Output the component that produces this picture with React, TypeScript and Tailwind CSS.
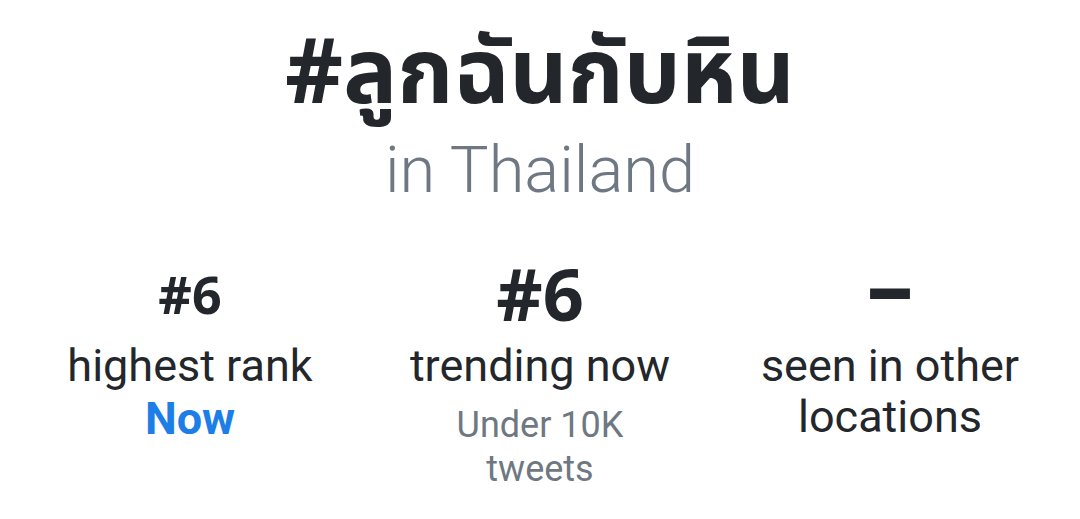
import React from 'react';

const Stat: React.FC<{ value: React.ReactNode; label: React.ReactNode; children?: React.ReactNode }> = ({
  value,
  label,
  children,
}) => (
  <div className="flex flex-col items-center text-center">
    <div className="h-[80px] flex items-end justify-center">{value}</div>
    <div className="text-[45px] leading-[51px] text-[#23272c] font-['Roboto',sans-serif]">{label}</div>
    {children}
  </div>
);

export default function App() {
  return (
    <div className="w-[1080px] h-[519px] bg-white overflow-hidden">
      <div className="flex flex-col items-center pt-[18px]">
        <h1 className="text-[90px] leading-[100px] font-bold text-[#23272c] font-['Noto_Sans','Noto_Sans_Thai',sans-serif]">
          #ลูกฉันกับหิน
        </h1>
        <div className="mt-[12px] text-[65px] leading-[80px] font-light text-[#6f7882] font-['Roboto',sans-serif]">
          in Thailand
        </div>
      </div>
      <div className="grid grid-cols-3 px-[15px] mt-[50px]">
        <Stat
          value={
            <span className="mb-[20px] text-[52px] leading-none font-bold text-[#23272c] font-['Noto_Sans',sans-serif]">
              #6
            </span>
          }
          label="highest rank"
        >
          <div className="mt-[2px] text-[45px] leading-[52px] font-bold text-[#1d7ee8] font-['Roboto',sans-serif]">Now</div>
        </Stat>
        <Stat
          value={
            <span className="mb-[11px] text-[72px] leading-none font-bold text-[#23272c] font-['Noto_Sans',sans-serif]">
              #6
            </span>
          }
          label="trending now"
        >
          <div className="mt-[12px] text-[36px] leading-[44px] text-[#6f7882] font-['Roboto',sans-serif]">
            Under 10K
            <br />
            tweets
          </div>
        </Stat>
        <Stat
          value={
            <span className="mb-[10px] text-[94px] leading-none font-bold text-[#23272c] font-['Noto_Sans',sans-serif]">
              –
            </span>
          }
          label={
            <>
              seen in other
              <br />
              locations
            </>
          }
        />
      </div>
    </div>
  );
}
